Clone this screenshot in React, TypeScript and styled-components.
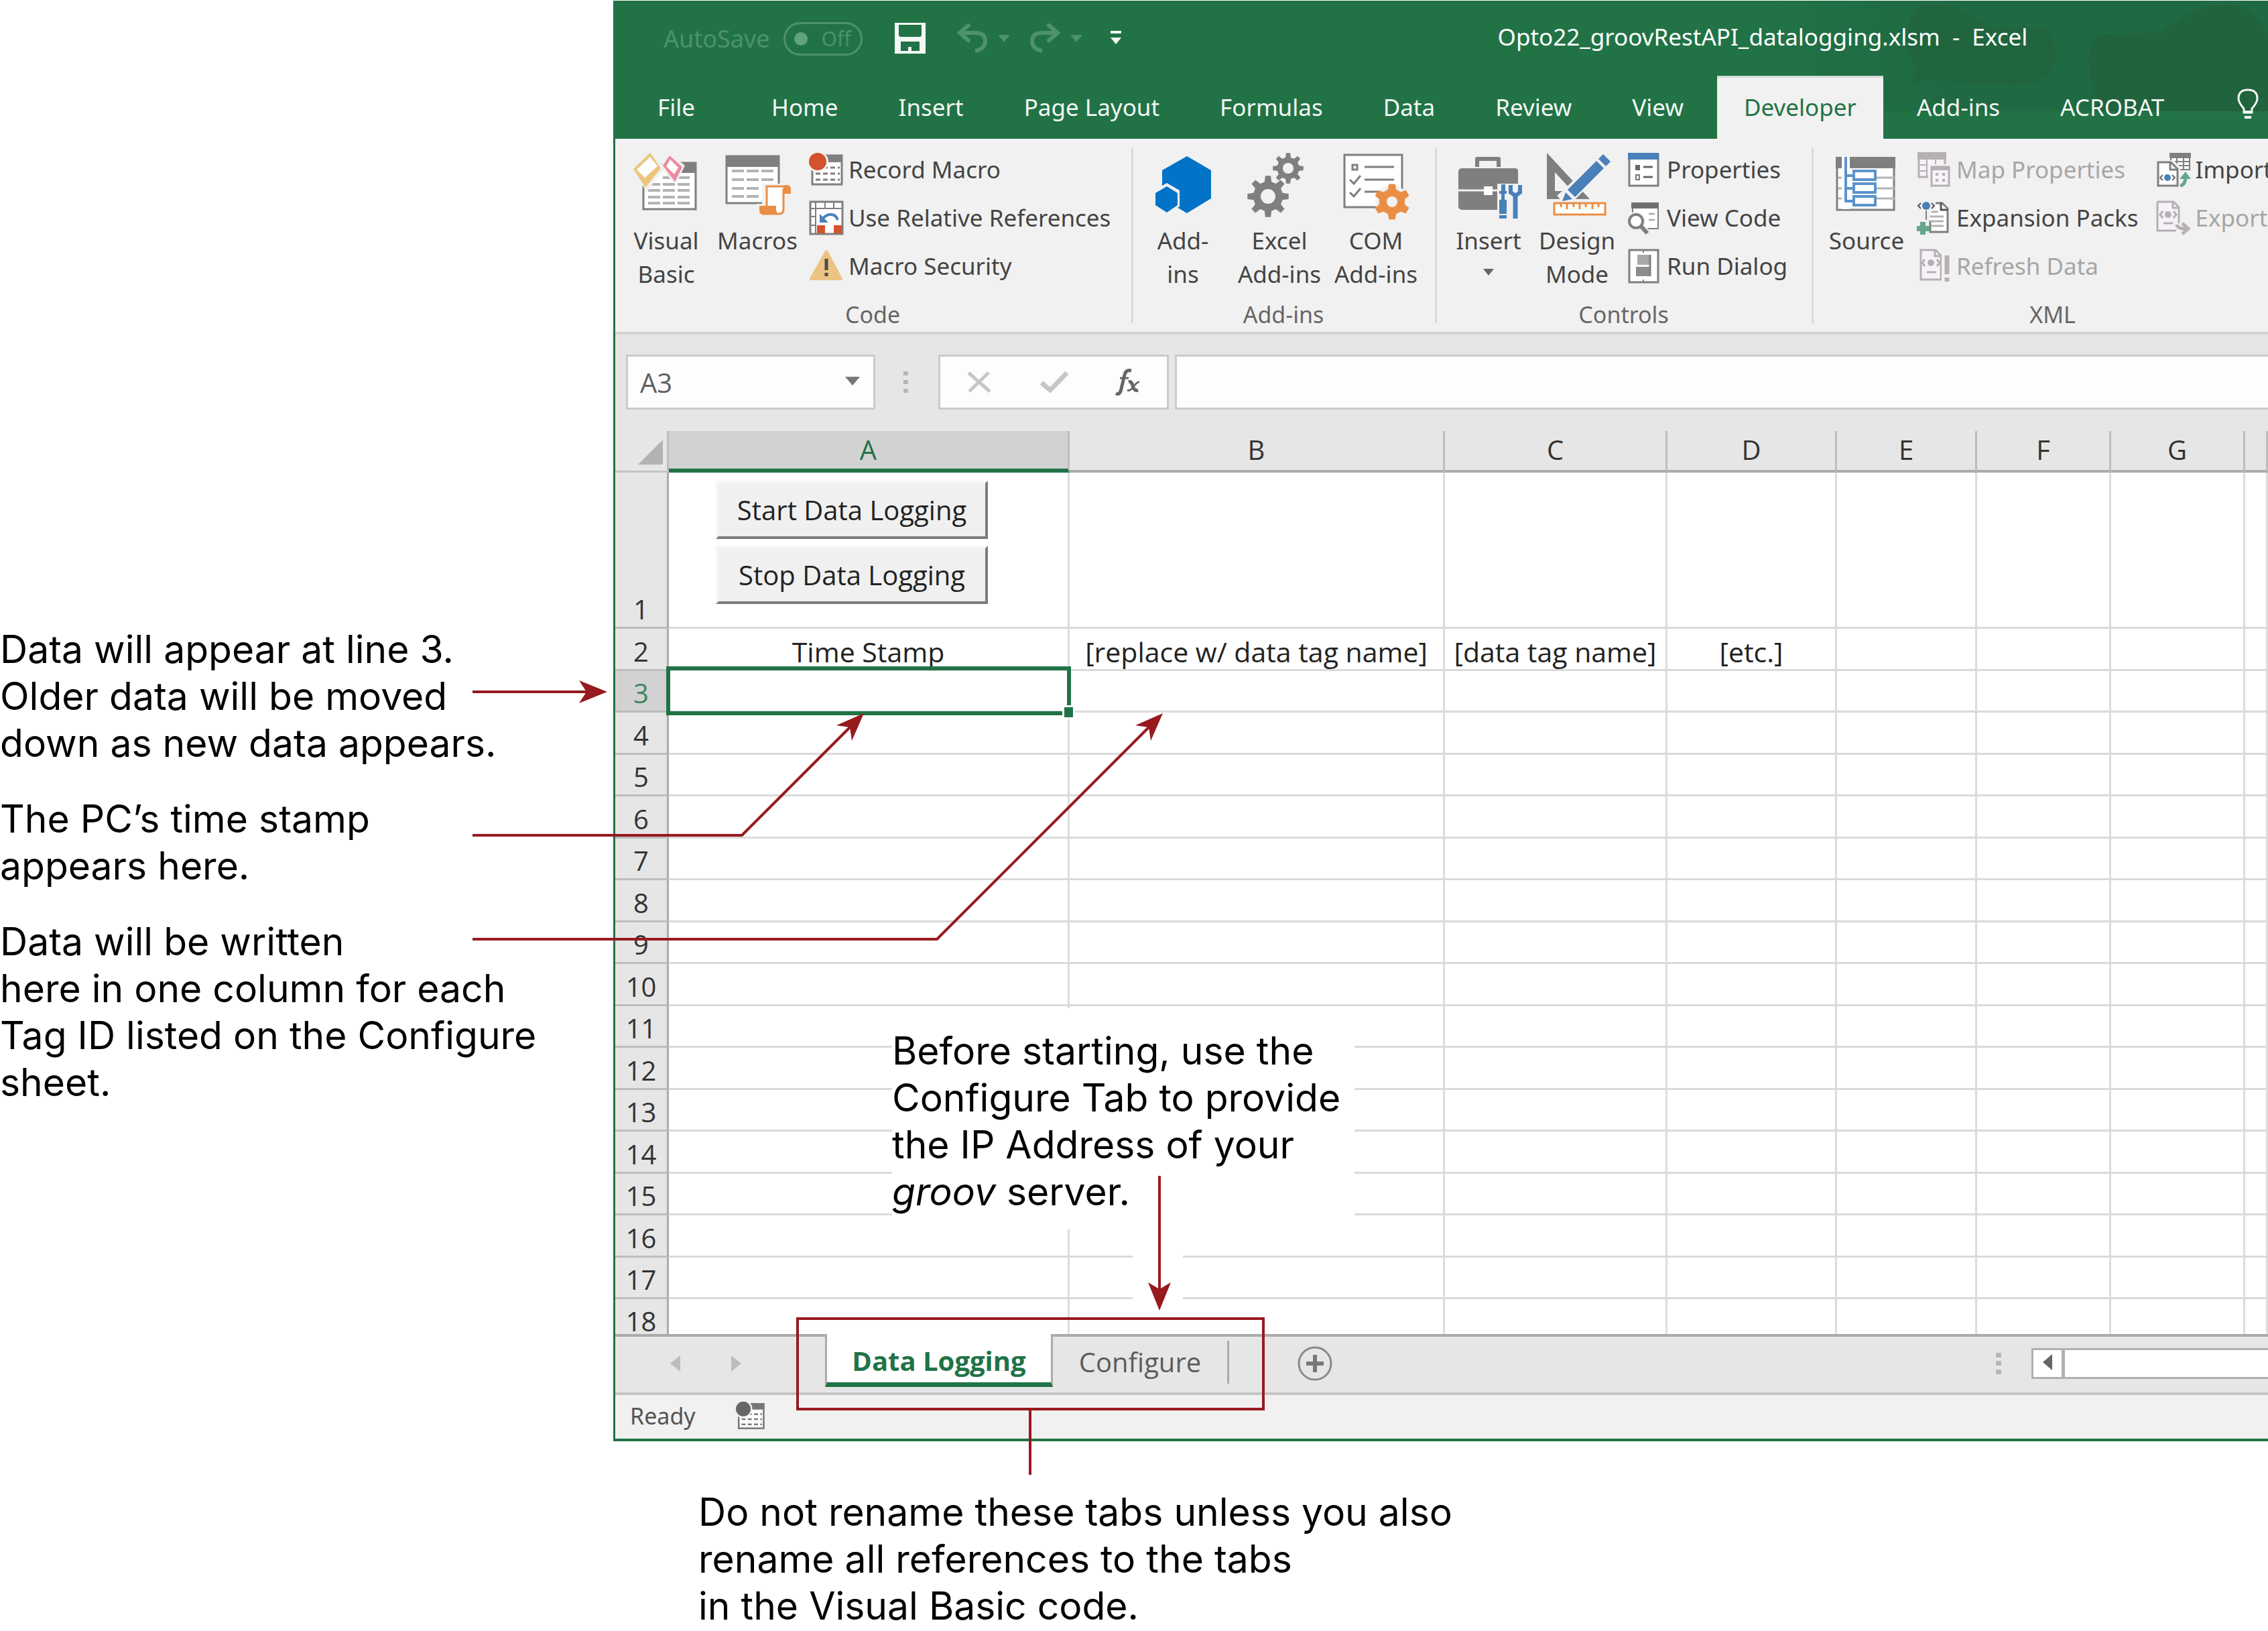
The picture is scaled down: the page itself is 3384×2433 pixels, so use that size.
import React from "react";
import styled, { createGlobalStyle, css } from "styled-components";

const UI = `"Noto Sans", "Open Sans", sans-serif`;
const SHEET = `"Open Sans", "Noto Sans", sans-serif`;
const NOTE = `Inter, Roboto, sans-serif`;
const GREEN = "#217346";
const RED = "#971a1e";

const GlobalStyle = createGlobalStyle`
  *, *::before, *::after { box-sizing: border-box; }
  body { margin: 0; background: #fff; }
  button, input, select { font: inherit; color: inherit; margin: 0; }
`;

const Figure = styled.main`
  position: relative;
  display: grid;
  grid-template-columns: 915px minmax(0, 1fr);
  padding-top: 1px;
  overflow: hidden;
  font-family: ${NOTE};
  color: #000;
`;

const noteText = css`
  margin: 0;
  font-size: 57px;
  line-height: 70px;
  white-space: nowrap;
`;

const Notes = styled.aside`
  display: flex;
  flex-direction: column;
  gap: 43px;
  padding-top: 933px;
`;

const Note = styled.p`
  ${noteText}
`;

const FootNote = styled.p`
  ${noteText}
  grid-column: 1 / -1;
  padding: 71px 0 0 1042px;
`;

const Window = styled.section`
  display: flex;
  flex-direction: column;
  min-width: 0;
  overflow: hidden;
  background: #e6e6e6;
  border-left: 3px solid ${GREEN};
  border-bottom: 4px solid ${GREEN};
  font-family: ${UI};
  color: #444;
`;

/* Title bar */

const Header = styled.header`
  position: relative;
  background: ${GREEN};
  color: #f2f7f4;
`;

const HeaderArt = styled.svg`
  position: absolute;
  top: 0;
  right: 0;
  width: 760px;
  height: 170px;
`;

const TitleRow = styled.div`
  position: relative;
  display: flex;
  align-items: center;
  height: 112px;
  padding-left: 72px;
`;

const AutoSave = styled.label`
  display: flex;
  align-items: center;
  gap: 20px;
  padding-top: 2px;
  font-size: 36px;
  line-height: 50px;
  color: #4d9269;
`;

const Toggle = styled.span`
  display: flex;
  align-items: center;
  justify-content: space-between;
  width: 118px;
  height: 50px;
  padding: 0 14px 0 13px;
  border: 3px solid #4d9269;
  border-radius: 25px;
  font-size: 30px;
`;

const ToggleInput = styled.input`
  appearance: none;
  width: 20px;
  height: 20px;
  border-radius: 50%;
  background: #5fa27c;
`;

const QuickAccess = styled.div`
  display: flex;
  align-items: center;
  padding-left: 48px;
`;

const IconButton = styled.button<{ $gap?: number }>`
  display: flex;
  align-items: center;
  gap: 14px;
  padding: 0;
  margin-right: ${(p) => p.$gap ?? 0}px;
  border: 0;
  background: none;
`;

const Title = styled.h1`
  margin: 0 0 0 562px;
  padding-bottom: 4px;
  font-size: 35px;
  font-weight: 400;
  line-height: 50px;
  color: #fff;
  white-space: pre;
`;

const Tabs = styled.nav`
  position: relative;
  display: flex;
  height: 94px;
  padding-left: 23px;
  gap: 10px;
`;

const Tab = styled.button<{ $active?: boolean }>`
  flex: none;
  padding: 0 40px 4px;
  border: 0;
  border-top: 3px solid ${(p) => (p.$active ? "#d3dcd6" : "transparent")};
  background: ${(p) => (p.$active ? "#f1f1f1" : "transparent")};
  color: ${(p) => (p.$active ? GREEN : "#f2f7f4")};
  font-size: 35px;
  white-space: nowrap;

  &:first-child {
    margin-right: 24px;
  }

  &:last-child {
    margin-left: 18px;
  }
`;

/* Ribbon */

const Ribbon = styled.div`
  display: flex;
  height: 292px;
  padding-bottom: 4px;
  background: #f1f1f1;
  border-bottom: 4px solid #d3d3d3;
`;

const Group = styled.section<{ $width: number; $pad: number }>`
  display: grid;
  grid-template-rows: 237px 50px;
  flex: none;
  width: ${(p) => p.$width}px;
  position: relative;

  &::after {
    content: "";
    position: absolute;
    right: 0;
    top: 13px;
    bottom: 9px;
    width: 3px;
    background: #dadada;
  }

  & > div {
    padding-left: ${(p) => p.$pad}px;
  }
`;

const GroupBody = styled.div`
  display: flex;
`;

const GroupLabel = styled.h2`
  margin: 0;
  padding-right: 5px;
  text-align: center;
  font-size: 34px;
  font-weight: 400;
  line-height: 50px;
  color: #666;
`;

const BigButton = styled.button<{ $width: number }>`
  display: flex;
  flex-direction: column;
  align-items: center;
  flex: none;
  gap: 6px;
  width: ${(p) => p.$width}px;
  padding: 21px 0 0;
  border: 0;
  background: none;
  font-size: 35px;
  line-height: 50px;
  text-align: center;
  white-space: nowrap;
`;

const Caret = styled.svg`
  display: block;
  margin: 17px auto 0;
`;

const List = styled.div<{ $gap?: number }>`
  display: flex;
  flex-direction: column;
  flex: none;
  padding: 10px 0 0 ${(p) => p.$gap ?? 9}px;
`;

const ListButton = styled.button`
  display: flex;
  align-items: center;
  gap: 7px;
  height: 72px;
  padding: 0;
  border: 0;
  background: none;
  font-size: 35px;
  line-height: 50px;
  white-space: nowrap;

  &:disabled {
    color: #a6a6a6;
  }
`;

/* Formula bar */

const FormulaBar = styled.div`
  display: flex;
  align-items: center;
  height: 144px;
  padding: 0 0 2px 16px;
`;

const box = css`
  height: 82px;
  border: 3px solid #cbcbcb;
  background: #fdfdfd;
`;

const NameBox = styled.div`
  ${box}
  position: relative;
  width: 372px;
`;

const NameSelect = styled.select`
  appearance: none;
  width: 100%;
  height: 100%;
  padding: 0 0 0 18px;
  border: 0;
  border-radius: 0;
  background: none;
  font-family: ${SHEET};
  font-size: 40px;
  color: #606060;
`;

const NameCaret = styled.svg`
  position: absolute;
  right: 20px;
  top: 30px;
  pointer-events: none;
`;

const Dots = styled.svg`
  flex: none;
  align-self: center;
  margin: 0 45px 0 42px;
`;

const FxBox = styled.div`
  ${box}
  display: flex;
  align-items: center;
  flex: none;
  width: 344px;
  padding-left: 41px;
`;

const FormulaInput = styled.input`
  ${box}
  flex: 1;
  min-width: 0;
  margin-left: 9px;
  padding: 0 20px;
  border-right: 0;
  border-radius: 0;
  font-family: ${SHEET};
  font-size: 40px;
`;

/* Grid */

const Grid = styled.table`
  width: 100%;
  min-width: 2432px;
  border-collapse: separate;
  border-spacing: 0;
  table-layout: fixed;
  background: #fff;
  font-family: ${SHEET};
  font-size: 40px;
  line-height: 44px;
  color: #333;

  th,
  td {
    padding: 0;
    font-weight: 400;
    text-align: center;
    vertical-align: bottom;
  }
`;

const ColHead = styled.th<{ $active?: boolean }>`
  height: 62px;
  background: ${(p) => (p.$active ? "#d2d2d2" : "#e6e6e6")};
  color: ${(p) => (p.$active ? GREEN : "#333")};
  border-right: 3px solid #bdbdbd;
  border-bottom: ${(p) => (p.$active ? `6px solid ${GREEN}` : "4px solid #ababab")};
  && {
    padding-bottom: ${(p) => (p.$active ? 6 : 8)}px;
  }
`;

const Corner = styled.th`
  background: #e6e6e6;
  border-right: 3px solid #bdbdbd;
  border-bottom: 3px solid #c4c4c4;
  && {
    vertical-align: middle;
  }
  svg {
    display: block;
    margin: 4px 0 0 34px;
  }
`;

const RowHead = styled.th<{ $active?: boolean }>`
  background: ${(p) => (p.$active ? "#d2d2d2" : "#e6e6e6")};
  color: ${(p) => (p.$active ? "#3d8560" : "#333")};
  border-right: 3px solid #ababab;
  border-bottom: 3px solid #bdbdbd;
`;

const Row = styled.tr<{ $height: number }>`
  height: ${(p) => p.$height}px;

  && > * {
    padding-bottom: 4px;
  }

  &&:last-child > * {
    padding-bottom: 0;
    border-bottom: 0;
    line-height: 38px;
  }
`;

const Cell = styled.td`
  border-right: 3px solid #dcdcdc;
  border-bottom: 3px solid #dadada;
  font-size: 41px;
  color: #222;
  white-space: nowrap;
`;

const ActiveCell = styled(Cell)`
  position: relative;
  z-index: 1;
`;

const ButtonCell = styled(Cell)`
  && {
    padding: 12px 0 0 70px;
    vertical-align: top;
  }
`;

const MacroButton = styled.button`
  display: block;
  width: 406px;
  height: 87px;
  margin-bottom: 10px;
  padding: 0;
  border: 4px solid;
  border-color: #f6f6f6 #7c7c7c #7c7c7c #f6f6f6;
  background: #f0f0f0;
  font-size: 40px;
  color: #222;
`;

const Selection = styled.div`
  position: absolute;
  inset: -7px -5px -7px -4px;
  border: 6px solid ${GREEN};

  &::after {
    content: "";
    position: absolute;
    right: -12px;
    bottom: -12px;
    width: 19px;
    height: 21px;
    border: 3px solid #fff;
    background: ${GREEN};
  }
`;

/* Sheet tabs and status */

const SheetBar = styled.div`
  display: flex;
  height: 91px;
  padding-bottom: 3px;
  border-top: 4px solid #ababab;
  border-bottom: 4px solid #c4c4c4;
`;

const SheetNav = styled.div`
  display: flex;
  align-items: center;
  gap: 76px;
  width: 313px;
  padding-left: 82px;
`;

const SheetTab = styled.button<{ $active?: boolean }>`
  flex: none;
  padding: 0;
  border: 0;
  background: none;
  font-family: ${SHEET};
  font-size: 40px;
  line-height: 44px;
  color: #5c5c5c;
  ${(p) =>
    p.$active
      ? css`
          width: 340px;
          height: 79px;
          margin-top: -4px;
          padding-top: 8px;
          border: 3px solid #ababab;
          border-top: 0;
          border-bottom: 7px solid ${GREEN};
          background: #fff;
          color: ${GREEN};
          font-weight: 700;
        `
      : css`
          width: 263px;
          height: 64px;
          margin-top: 6px;
          border-right: 3px solid #ababab;
        `}
`;

const AddSheet = styled.button`
  align-self: center;
  margin: 0 auto 0 102px;
  padding: 0;
  border: 0;
  background: none;
  svg {
    display: block;
  }
`;

const Scroll = styled.div`
  display: flex;
  align-self: center;
  width: 353px;
  height: 46px;
  border: 3px solid #b0b0b0;
  border-right: 0;
  background: #fff;
`;

const ScrollButton = styled.button`
  width: 47px;
  padding: 0;
  border: 0;
  border-right: 5px solid #b0b0b0;
  background: #fff;
`;

const Status = styled.footer`
  display: flex;
  align-items: center;
  gap: 60px;
  height: 65px;
  padding: 0 0 4px 22px;
  background: #f1f1f1;
  font-size: 34px;
  line-height: 44px;
  color: #555;
`;

/* Callouts over the sheet */

const Callout = styled.p`
  ${noteText}
  position: absolute;
  left: 1331px;
  top: 1504px;
  width: 690px;
  padding: 29px 0 20px;
  background: #fff;
`;

const Arrows = styled.svg`
  position: absolute;
  left: 0;
  top: 0;
  z-index: 2;
  pointer-events: none;
`;

/* Icons */

const G = "#7f7f7f";
const D = "#b5b0b4";
const O = "#e98e44";
const B = "#4a80ba";
const T = "#66a68c";

const gear = (cx: number, cy: number, r: number, teeth: number) => {
  const inner = r * 0.72;
  const step = (Math.PI * 2) / teeth;
  const pts: string[] = [];
  for (let i = 0; i < teeth; i++) {
    const a = i * step - Math.PI / 2;
    [
      [inner, -0.3],
      [r, -0.17],
      [r, 0.17],
      [inner, 0.3],
    ].forEach(([d, k]) =>
      pts.push(`${(cx + d * Math.cos(a + k * step)).toFixed(1)},${(cy + d * Math.sin(a + k * step)).toFixed(1)}`)
    );
  }
  return pts.join(" ");
};

const Big = ({ children }: { children: React.ReactNode }) => (
  <svg width="102" height="100" viewBox="0 0 102 100" fill="none" aria-hidden="true">
    {children}
  </svg>
);

const Small = ({ children, size = 52 }: { children: React.ReactNode; size?: number }) => (
  <svg width={size} height={size} viewBox="0 0 52 52" fill="none" aria-hidden="true">
    {children}
  </svg>
);

const VisualBasicIcon = () => (
  <Big>
    <rect x="17" y="15" width="78" height="69" fill="#fff" stroke={G} strokeWidth="3" />
    <rect x="74" y="14" width="22" height="16" fill={G} />
    <path d="M24 47h64M24 56h64M24 66h64M24 75h64M46 37h42" stroke="#b3b3b3" strokeWidth="4" strokeDasharray="18 4" />
    <path d="M27 -4L48 24L22 58L-2 24V-4ZM56 0L79 19L65 48L43 22Z" fill="#f1f1f1" />
    <path d="M15 12h54l4 4h-58z" fill="#f1f1f1" />
    <path d="M27 0L43 23L20 52L2 24Z" fill="#ecc57c" />
    <path d="M27 6L38 20L19 37L7 25Z" fill="#fff" />
    <path d="M56 4L75 21L64 43L46 19Z" fill="#ec8aa0" />
    <path d="M57 10L69 22L63 32L51 20Z" fill="#fff" />
  </Big>
);

const MacrosIcon = () => (
  <Big>
    <rect x="5" y="5" width="78" height="70" fill="#fff" stroke={G} strokeWidth="3" />
    <rect x="4" y="4" width="80" height="17" fill={G} />
    <path d="M13 27h64M13 40h64M13 53h40M13 65h40" stroke="#b3b3b3" strokeWidth="4" strokeDasharray="18 4" />
    <path d="M58 46h44v18h-4v30H50V76h8z" fill="#f1f1f1" />
    <path d="M65 50H93Q90 52 90 58V84Q90 91 84 91H62Q65 88 65 80V55Q65 50 65 50Z" fill="#fff" stroke={O} strokeWidth="3" />
    <path d="M92 48H96Q101 49 101 54V61H91V52Z" fill={O} />
    <path d="M54 79H79V84Q79 90 84 92H58Q54 91 54 86Z" fill={O} />
  </Big>
);

const RecordIcon = ({ dot = "#d5522f", tone = G, size = 52 }: { dot?: string; tone?: string; size?: number }) => (
  <Small size={size}>
    <rect x="5" y="5" width="44" height="43" fill="#fff" stroke={tone} strokeWidth="3" />
    <rect x="27" y="4" width="23" height="11" fill={tone} />
    <path d="M10 23h36M10 32h36M10 41h36" stroke={tone} strokeWidth="3" strokeDasharray="7 4" />
    <circle cx="13" cy="14" r="16" fill="#f1f1f1" />
    <circle cx="13" cy="14" r="13" fill={dot} />
  </Small>
);

const RelativeIcon = () => (
  <Small>
    <rect x="2" y="2" width="48" height="48" fill="#fff" stroke={G} strokeWidth="3" />
    <path d="M10 2v48M2 12h48M24 2v10M37 2v10M2 24h8M2 37h8" stroke={G} strokeWidth="2" />
    <path d="M12 37h12v12H12zM37 37h12v12H37z" fill="#d5522f" />
    <path d="M43 29Q40 20 31 21Q24 22 19 29" stroke={B} strokeWidth="4" />
    <path d="M16 20v13h13z" fill={B} />
  </Small>
);

const WarningIcon = () => (
  <Small>
    <path d="M26 4L48 45H3Z" fill="#ecc383" stroke="#ecc383" strokeWidth="4" strokeLinejoin="round" />
    <path d="M26 15v17M26 36v5" stroke="#4a4a4a" strokeWidth="5" />
  </Small>
);

const HexIcon = () => (
  <Big>
    <path d="M57 5L93 26V68L57 90L20 68V26Z" fill="#0373c8" />
    <path d="M27 45L46 56V80L27 91L8 80V56Z" fill="#f1f1f1" />
    <path d="M27 50L43 60V78L27 89L10 78V60Z" fill="#0373c8" />
  </Big>
);

const GearsIcon = () => (
  <Big>
    <polygon points={gear(34, 65, 31, 8)} fill={G} />
    <circle cx="34" cy="65" r="11" fill="#f1f1f1" />
    <polygon points={gear(64, 23, 23, 8)} fill={G} />
    <circle cx="64" cy="23" r="8" fill="#f1f1f1" />
  </Big>
);

const ComIcon = () => (
  <Big>
    <rect x="4" y="3" width="86" height="78" fill="#fff" stroke={G} strokeWidth="3" />
    <path d="M34 21h44M34 40h44M34 58h20" stroke={G} strokeWidth="3" />
    <rect x="16" y="18" width="7" height="7" stroke={G} strokeWidth="3" />
    <path d="M12 40l6 6l10-12M12 59l6 6l10-12" stroke={G} strokeWidth="3" />
    <circle cx="75" cy="73" r="25" fill="#f1f1f1" />
    <polygon points={gear(75, 73, 27, 6)} fill={O} />
    <circle cx="75" cy="73" r="8" fill="#f1f1f1" />
  </Big>
);

const ToolboxIcon = () => (
  <Big>
    <path d="M34 21V9H66V21" stroke={G} strokeWidth="6" strokeLinejoin="round" />
    <rect x="6" y="23" width="89" height="62" rx="5" fill={G} />
    <path d="M6 56h62" stroke="#f1f1f1" strokeWidth="3" />
    <rect x="44" y="50" width="13" height="13" fill="#fff" />
    <path d="M64 46h38v54H64z" fill="#f1f1f1" />
    <path d="M62 23h28q5 0 5 5v18H62z" fill={G} />
    <path d="M70 47h6v10h2v4h-3v9h3v21H67V70h3v-9h-3v-4h3zM67 93h11v5H67z" fill={B} />
    <path d="M84 48v11l7 5l7-5V48" stroke={B} strokeWidth="6" />
    <path d="M91 62v36" stroke={B} strokeWidth="7" />
  </Big>
);

const DesignIcon = () => (
  <Big>
    <path fillRule="evenodd" d="M6 0L70 69H6ZM18 29V57H44Z" fill={G} />
    <path d="M98 4L38 64L28 72" stroke="#f1f1f1" strokeWidth="22" />
    <path d="M80 12L91 23L48 66L37 55Z" fill={B} />
    <path d="M83 9L90 2L101 13L94 20Z" fill={B} />
    <path d="M34 59L44 69L29 72Z" fill={B} />
    <rect x="17" y="75" width="76" height="17" fill="#fff" stroke={O} strokeWidth="3" />
    <path d="M27 76v5M36 76v8M46 76v5M55 76v8M64 76v5M74 76v8M83 76v5" stroke={O} strokeWidth="3" />
  </Big>
);

const PropertiesIcon = () => (
  <Small>
    <rect x="3" y="3" width="43" height="47" fill="#fff" stroke={G} strokeWidth="3" />
    <rect x="1" y="1" width="46" height="10" fill={B} />
    <rect x="12" y="19" width="7" height="8" fill="#666" />
    <rect x="13" y="34" width="5" height="7" stroke="#777" strokeWidth="2" />
    <path d="M24 22h14M24 37h14" stroke="#666" strokeWidth="3" />
  </Small>
);

const ViewCodeIcon = () => (
  <Small>
    <rect x="8" y="5" width="38" height="37" fill="#fff" stroke={G} strokeWidth="2" />
    <rect x="6" y="3" width="41" height="9" fill="#6f6f6f" />
    <path d="M32 20h9M32 29h9" stroke="#b3b3b3" strokeWidth="3" />
    <circle cx="13" cy="31" r="14" fill="#f1f1f1" />
    <path d="M20 38l12 12" stroke="#f1f1f1" strokeWidth="9" />
    <circle cx="13" cy="31" r="10" fill="#fff" stroke={G} strokeWidth="4" />
    <path d="M20 38l10 11" stroke={G} strokeWidth="6" />
  </Small>
);

const RunDialogIcon = () => (
  <Small>
    <rect x="3" y="2" width="43" height="48" fill="#fff" stroke={G} strokeWidth="3" />
    <path d="M24 2v4M24 46v4" stroke={G} strokeWidth="2" />
    <rect x="15" y="9" width="20" height="15" fill="#a8a8a8" />
    <rect x="13" y="27" width="22" height="14" fill="#8d8d8d" />
    <path d="M34 9v32" stroke={G} strokeWidth="3" />
  </Small>
);

const SourceIcon = () => (
  <Big>
    <rect x="7" y="8" width="85" height="77" fill="#fff" stroke={G} strokeWidth="3" />
    <rect x="5" y="6" width="89" height="17" fill={G} />
    <path d="M8 37h85M8 53h85M8 68h85" stroke="#b3b3b3" strokeWidth="3" />
    <path d="M14 6h12v78H14z" fill="#fff" />
    <path d="M26 24h40v58H26z" fill="#fff" />
    <path d="M20 6v66h12M20 34h12M20 53h12" stroke="#5b93cb" strokeWidth="4" />
    <path d="M32 27h32v13H32zM32 46h32v13H32zM32 65h32v13H32z" fill="#fff" stroke="#5b93cb" strokeWidth="4" />
  </Big>
);

const MapIcon = () => (
  <Small>
    <rect x="3" y="3" width="39" height="34" fill="#f8f1f7" stroke={D} strokeWidth="3" />
    <path d="M2 1h41v9H2zM15 10v27M28 10v12M2 19h14M2 28h14" stroke={D} strokeWidth="2" fill={D} />
    <rect x="17" y="18" width="35" height="34" fill="#f1f1f1" />
    <rect x="22" y="22" width="26" height="28" fill="#f8f1f7" stroke={D} strokeWidth="3" />
    <path d="M21 21h28v6H21zM28 31h4v4h-4zM38 31h4v4h-4zM28 40h4v4h-4zM38 40h4v4h-4z" fill={D} />
  </Small>
);

const ExpansionIcon = () => (
  <Small>
    <path d="M22 4H38L46 12V47H20V30" fill="#fff" stroke={G} strokeWidth="3" />
    <path d="M36 3v11h10" stroke="#555" strokeWidth="3" />
    <path d="M22 17h10M20 24h20M20 31h20M22 38h18" stroke="#b3b3b3" strokeWidth="3" />
    <path d="M0 0h28v15H0z" fill="#f1f1f1" />
    <circle cx="14" cy="8" r="6" fill={B} />
    <path d="M6 4L2 8L6 12M22 4L26 8L22 12" stroke="#555" strokeWidth="2" />
    <path d="M14 15v14" stroke={G} strokeWidth="2" />
    <path d="M9 32v19M0 42h19" stroke={T} strokeWidth="8" />
  </Small>
);

const RefreshIcon = () => (
  <Small>
    <path d="M6 2H28L36 10V46H6Z" fill="#f8f1f7" stroke={D} strokeWidth="3" />
    <path d="M27 2v9h9M15 35h14" stroke={D} strokeWidth="3" />
    <circle cx="21" cy="21" r="5" fill={D} />
    <path d="M12 16L8 21L12 26M30 16L34 21L30 26" stroke={D} strokeWidth="3" />
    <path d="M39 8v42" stroke="#f1f1f1" strokeWidth="4" />
    <path d="M45 10v28M45 43v6" stroke={D} strokeWidth="7" />
  </Small>
);

const ImportIcon = () => (
  <Small>
    <rect x="22" y="4" width="28" height="22" fill="#fff" stroke={G} strokeWidth="2" />
    <path d="M21 2h30v6H21zM31 8v18M41 8v18M22 14h28M22 20h28" stroke={G} strokeWidth="2" fill={G} />
    <path d="M0 12H26L36 22V52H0Z" fill="#f1f1f1" />
    <path d="M3 15H22L32 25V50H3Z" fill="#fff" stroke={G} strokeWidth="3" />
    <path d="M21 15v11h11" stroke={G} strokeWidth="3" />
    <circle cx="17" cy="38" r="5" fill={B} />
    <path d="M10 34L6 38L10 42M24 34L28 38L24 42" stroke="#666" strokeWidth="2" />
    <path d="M36 50Q44 49 44 36" stroke={T} strokeWidth="5" />
    <path d="M35 40L44 29L52 40Z" fill={T} />
  </Small>
);

const ExportIcon = () => (
  <Small>
    <path d="M2 2H26L34 10V34M30 45H2V2" fill="#f8f1f7" stroke={D} strokeWidth="3" />
    <path d="M25 2v9h9M11 34h14" stroke={D} strokeWidth="3" />
    <circle cx="18" cy="21" r="5" fill={D} />
    <path d="M10 16L6 21L10 26M26 16L30 21L26 26" stroke={D} strokeWidth="3" />
    <path d="M31 36Q32 43 46 42M39 34L48 42L39 50" stroke={D} strokeWidth="5" />
  </Small>
);

/* Data */

const tabs = ["File", "Home", "Insert", "Page Layout", "Formulas", "Data", "Review", "View", "Developer", "Add-ins", "ACROBAT"];
const columns: [string, number | undefined][] = [
  ["A", 598],
  ["B", 560],
  ["C", 332],
  ["D", 253],
  ["E", 209],
  ["F", 200],
  ["G", 200],
  ["", undefined],
];
const headings = ["Time Stamp", "[replace w/ data tag name]", "[data tag name]", "[etc.]"];
const rows = Array.from({ length: 18 }, (_, i) => i + 1);

/* The last row is only partly scrolled into view. */
const rowHeight = (n: number) => (n === 1 ? 233 : n === 18 ? 52 : n % 2 === 0 ? 63 : 62);

const renderCell = (row: number, column: number, name: string) => {
  if (row === 1 && column === 0) {
    return (
      <ButtonCell key={name}>
        <MacroButton>Start Data Logging</MacroButton>
        <MacroButton>Stop Data Logging</MacroButton>
      </ButtonCell>
    );
  }
  if (row === 3 && column === 0) {
    return (
      <ActiveCell key={name}>
        <Selection />
      </ActiveCell>
    );
  }
  return <Cell key={name}>{row === 2 && headings[column]}</Cell>;
};

export default function App() {
  return (
    <>
      <GlobalStyle />
      <Figure>
        <Notes>
          <Note>
            Data will appear at line 3.
            <br />
            Older data will be moved
            <br />
            down as new data appears.
          </Note>
          <Note>
            The PC’s time stamp
            <br />
            appears here.
          </Note>
          <Note>
            Data will be written
            <br />
            here in one column for each
            <br />
            Tag ID listed on the Configure
            <br />
            sheet.
          </Note>
        </Notes>

        <Window>
          <Header>
            <HeaderArt viewBox="0 0 760 170" aria-hidden="true">
              <defs>
                <linearGradient id="fade" x1="0" x2="1" y1="0" y2="0">
                  <stop offset="0" stopColor="#1f6a42" stopOpacity="0" />
                  <stop offset="0.35" stopColor="#1f6a42" />
                </linearGradient>
              </defs>
              <rect width="760" height="165" fill="url(#fade)" />
              <path d="M235 12Q275 -4 305 18L345 40H420Q450 50 440 100Q425 128 370 126L250 118L226 124L236 100Q205 60 235 12Z" fill="#20653e" />
              <path d="M640 20Q700 -8 740 20L760 50V165H505Q490 160 500 130Q480 60 515 50L600 48Z" fill="#20633c" />
            </HeaderArt>
            <TitleRow>
              <AutoSave>
                AutoSave
                <Toggle>
                  <ToggleInput type="checkbox" />
                  Off
                </Toggle>
              </AutoSave>
              <QuickAccess>
                <IconButton aria-label="Save" $gap={46}>
                  <svg width="46" height="46" viewBox="0 0 46 46" fill="none">
                    <path fillRule="evenodd" fill="#f4f8f5" d="M0 0H46V46H0ZM6 3V19L8 21H38L40 19V3ZM9 28V42H20V36H25V42H37V28Z" />
                  </svg>
                </IconButton>
                <IconButton aria-label="Undo" $gap={28}>
                  <svg width="48" height="44" viewBox="0 0 48 44" fill="none" stroke="#4d9269" strokeWidth="6">
                    <path d="M20 1L5 14L20 27M6 14H28Q43 14 43 26Q43 38 28 41" />
                  </svg>
                  <svg width="18" height="11" viewBox="0 0 18 11">
                    <path d="M0 0H18L9 11Z" fill="#4d9269" />
                  </svg>
                </IconButton>
                <IconButton aria-label="Redo" $gap={42}>
                  <svg width="48" height="44" viewBox="0 0 48 44" fill="none" stroke="#4d9269" strokeWidth="6">
                    <path d="M28 1L43 14L28 27M42 14H20Q5 14 5 26Q5 38 20 41" />
                  </svg>
                  <svg width="18" height="11" viewBox="0 0 18 11">
                    <path d="M0 0H18L9 11Z" fill="#4d9269" />
                  </svg>
                </IconButton>
                <IconButton aria-label="Customize Quick Access Toolbar">
                  <svg width="16" height="22" viewBox="0 0 16 22" fill="#f4f8f5">
                    <path d="M0 0H16V4H0ZM0 10H16L8 20Z" />
                  </svg>
                </IconButton>
              </QuickAccess>
              <Title>{"Opto22_groovRestAPI_datalogging.xlsm  -  Excel"}</Title>
            </TitleRow>
            <Tabs>
              {tabs.map((t) => (
                <Tab key={t} $active={t === "Developer"}>
                  {t}
                </Tab>
              ))}
              <Tab aria-label="Tell me what you want to do">
                <svg width="34" height="48" viewBox="0 0 34 48" fill="none" stroke="#f2f7f4" strokeWidth="3">
                  <path d="M11 37V31Q3 22 3 16Q3 3 17 3Q31 3 31 16Q31 22 23 31V37Z" />
                  <path d="M10 36H24M12 44H22" strokeWidth="4" />
                </svg>
              </Tab>
            </Tabs>
          </Header>

          <Ribbon>
            <Group $width={773} $pad={8}>
              <GroupBody>
                <BigButton $width={136}>
                  <VisualBasicIcon />
                  <span>
                    Visual
                    <br />
                    Basic
                  </span>
                </BigButton>
                <BigButton $width={136}>
                  <MacrosIcon />
                  <span>Macros</span>
                </BigButton>
                <List>
                  <ListButton>
                    <RecordIcon />
                    Record Macro
                  </ListButton>
                  <ListButton>
                    <RelativeIcon />
                    Use Relative References
                  </ListButton>
                  <ListButton>
                    <WarningIcon />
                    Macro Security
                  </ListButton>
                </List>
              </GroupBody>
              <GroupLabel>Code</GroupLabel>
            </Group>

            <Group $width={453} $pad={2}>
              <GroupBody>
                <BigButton $width={144}>
                  <HexIcon />
                  <span>
                    Add-
                    <br />
                    ins
                  </span>
                </BigButton>
                <BigButton $width={144}>
                  <GearsIcon />
                  <span>
                    Excel
                    <br />
                    Add-ins
                  </span>
                </BigButton>
                <BigButton $width={144}>
                  <ComIcon />
                  <span>
                    COM
                    <br />
                    Add-ins
                  </span>
                </BigButton>
              </GroupBody>
              <GroupLabel>Add-ins</GroupLabel>
            </Group>

            <Group $width={562} $pad={11}>
              <GroupBody>
                <BigButton $width={132}>
                  <ToolboxIcon />
                  <span>
                    Insert
                    <Caret width="16" height="10" viewBox="0 0 16 10">
                      <path d="M0 0H16L8 10Z" fill="#666" />
                    </Caret>
                  </span>
                </BigButton>
                <BigButton $width={132}>
                  <DesignIcon />
                  <span>
                    Design
                    <br />
                    Mode
                  </span>
                </BigButton>
                <List>
                  <ListButton>
                    <PropertiesIcon />
                    Properties
                  </ListButton>
                  <ListButton>
                    <ViewCodeIcon />
                    View Code
                  </ListButton>
                  <ListButton>
                    <RunDialogIcon />
                    Run Dialog
                  </ListButton>
                </List>
              </GroupBody>
              <GroupLabel>Controls</GroupLabel>
            </Group>

            <Group $width={718} $pad={13}>
              <GroupBody>
                <BigButton $width={132}>
                  <SourceIcon />
                  <span>Source</span>
                </BigButton>
                <List>
                  <ListButton disabled>
                    <MapIcon />
                    Map Properties
                  </ListButton>
                  <ListButton>
                    <ExpansionIcon />
                    Expansion Packs
                  </ListButton>
                  <ListButton disabled>
                    <RefreshIcon />
                    Refresh Data
                  </ListButton>
                </List>
                <List $gap={26}>
                  <ListButton>
                    <ImportIcon />
                    Import
                  </ListButton>
                  <ListButton disabled>
                    <ExportIcon />
                    Export
                  </ListButton>
                </List>
              </GroupBody>
              <GroupLabel>XML</GroupLabel>
            </Group>
          </Ribbon>

          <FormulaBar>
            <NameBox>
              <NameSelect aria-label="Name Box" defaultValue="A3">
                <option>A3</option>
              </NameSelect>
              <NameCaret width="22" height="13" viewBox="0 0 22 13">
                <path d="M0 0H22L11 13Z" fill="#777" />
              </NameCaret>
            </NameBox>
            <Dots width="7" height="32" viewBox="0 0 7 32" fill="#b5b5b5">
              <path d="M0 0H7V6H0ZM0 13H7V19H0ZM0 26H7V32H0Z" />
            </Dots>
            <FxBox>
              <IconButton aria-label="Cancel" $gap={74}>
                <svg width="34" height="32" viewBox="0 0 34 32" fill="none" stroke="#c6c6c6" strokeWidth="5">
                  <path d="M1 2L33 30M31 2L2 30" />
                </svg>
              </IconButton>
              <IconButton aria-label="Enter" $gap={70}>
                <svg width="42" height="32" viewBox="0 0 42 32" fill="none" stroke="#c6c6c6" strokeWidth="7">
                  <path d="M2 17L15 28L40 2" />
                </svg>
              </IconButton>
              <IconButton aria-label="Insert Function">
                <svg width="38" height="40" viewBox="0 0 38 40" fill="none" stroke="#666" strokeWidth="3">
                  <path d="M1 37Q7 40 9 30L14 9Q16 1 24 3" strokeWidth="5" />
                  <path d="M7 14H20" />
                  <path d="M20 20Q24 18 26 25Q28 34 34 32" strokeWidth="5" />
                  <path d="M36 20Q33 19 27 27Q22 34 18 32" />
                </svg>
              </IconButton>
            </FxBox>
            <FormulaInput aria-label="Formula Bar" />
          </FormulaBar>

          <Grid>
            <colgroup>
              <col style={{ width: 80 }} />
              {columns.map(([name, width]) => (
                <col key={name} style={{ width }} />
              ))}
            </colgroup>
            <thead>
              <tr>
                <Corner>
                  <svg width="37" height="37" viewBox="0 0 37 37">
                    <path d="M37 0V37H0Z" fill="#b3b3b3" />
                  </svg>
                </Corner>
                {columns.map(([name]) => (
                  <ColHead key={name} scope="col" $active={name === "A"}>
                    {name}
                  </ColHead>
                ))}
              </tr>
            </thead>
            <tbody>
              {rows.map((n) => (
                <Row key={n} $height={rowHeight(n)}>
                  <RowHead scope="row" $active={n === 3}>
                    {n}
                  </RowHead>
                  {columns.map(([name], c) => renderCell(n, c, name))}
                </Row>
              ))}
            </tbody>
          </Grid>

          <SheetBar>
            <SheetNav>
              <IconButton aria-label="Previous sheets">
                <svg width="15" height="24" viewBox="0 0 15 24">
                  <path d="M15 0V24L0 12Z" fill="#bdbdbd" />
                </svg>
              </IconButton>
              <IconButton aria-label="Next sheets">
                <svg width="15" height="24" viewBox="0 0 15 24">
                  <path d="M0 0V24L15 12Z" fill="#bdbdbd" />
                </svg>
              </IconButton>
            </SheetNav>
            <SheetTab $active>Data Logging</SheetTab>
            <SheetTab>Configure</SheetTab>
            <AddSheet aria-label="New sheet">
              <svg width="52" height="52" viewBox="0 0 52 52" fill="none">
                <circle cx="26" cy="26" r="24" stroke="#8a8a8a" strokeWidth="3" />
                <path d="M26 13V39M13 26H39" stroke="#777" strokeWidth="6" />
              </svg>
            </AddSheet>
            <Dots width="8" height="32" viewBox="0 0 8 32" fill="#b5b5b5">
              <path d="M0 0H8V7H0ZM0 12H8V19H0ZM0 25H8V32H0Z" />
            </Dots>
            <Scroll>
              <ScrollButton aria-label="Scroll left">
                <svg width="14" height="24" viewBox="0 0 14 24">
                  <path d="M14 0V24L0 12Z" fill="#666" />
                </svg>
              </ScrollButton>
            </Scroll>
          </SheetBar>
          <Status>
            Ready
            <RecordIcon dot="#666" tone="#777" size={44} />
          </Status>
        </Window>

        <FootNote>
          Do not rename these tabs unless you also
          <br />
          rename all references to the tabs
          <br />
          in the Visual Basic code.
        </FootNote>

        <Callout>
          Before starting, use the
          <br />
          Configure Tab to provide
          <br />
          the IP Address of your
          <br />
          <em>groov</em> server.
        </Callout>

        <Arrows width="2100" height="2250" viewBox="0 0 2100 2250" fill="none" stroke={RED} strokeWidth="4" aria-hidden="true">
          <path d="M1690 1834H1765V1960H1690Z" fill="#fff" stroke="none" />
          <path d="M705 1032H880M705 1246H1107L1270 1083M705 1401H1398L1715 1084M1730 1754V1930M1537 2102V2200" />
          <rect x="1190" y="1967" width="695" height="135" />
          <g fill={RED} stroke="none">
            <path d="M906 1032L864 1015L875 1032L864 1049Z" />
            <path d="M1289 1064L1248 1082L1268 1085L1271 1105Z" />
            <path d="M1735 1064L1694 1082L1714 1085L1717 1105Z" />
            <path d="M1730 1955L1713 1913L1730 1923L1747 1913Z" />
          </g>
        </Arrows>
      </Figure>
    </>
  );
}
